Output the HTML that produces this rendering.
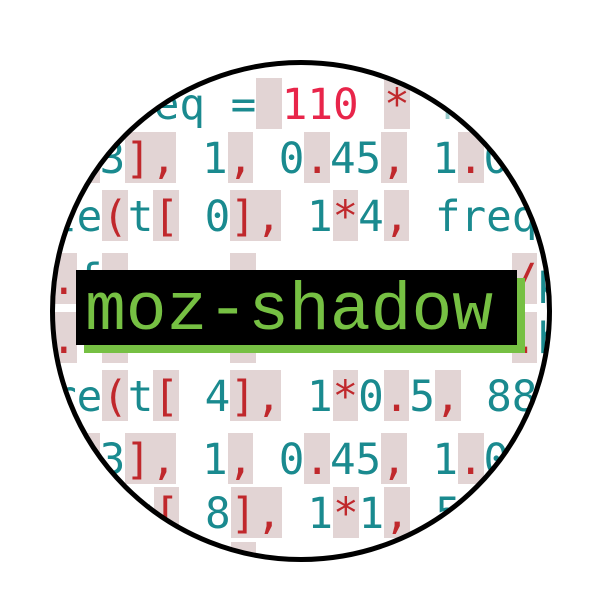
<!DOCTYPE html>
<html><head><meta charset="utf-8"><style>
html,body{margin:0;padding:0;background:#fff;width:600px;height:600px;overflow:hidden;position:relative}
#clip{position:absolute;left:0;top:0;width:600px;height:600px;clip-path:circle(248px at 301px 310px);}
.r{position:absolute;white-space:pre;font-family:"DejaVu Sans Mono",monospace;font-size:42.6px;line-height:54px;height:51px;color:#1a8a8f}
.r span{display:inline-block;width:25.6px;height:51px;text-align:center;vertical-align:top;overflow:visible}
.p{background:#e2d4d4;color:#c0282c}
.n{color:#e8254a}
#ring{position:absolute;left:50px;top:60px;width:492px;height:492px;border:5px solid #000;border-radius:50%}
#lab{position:absolute;left:76px;top:270px;width:441px;height:75px;background:#000;box-shadow:8px 8px 0 #76c043}
#lab div{position:absolute;left:9px;top:4px;font-family:"Liberation Mono","Courier New",monospace;font-size:68px;line-height:75px;color:#76c043;white-space:pre}
</style></head><body>
<div id="clip">
<div class="r" style="left:77px;top:78px"><span></span><span></span><span></span><span>e</span><span>q</span><span> </span><span>=</span><span class="p"> </span><span class="n">1</span><span class="n">1</span><span class="n">0</span><span> </span><span class="p">*</span><span> </span><span style="color:#9cc">f</span></div>
<div class="r" style="left:74px;top:132px"><span class="p">[</span><span>3</span><span class="p">]</span><span class="p">,</span><span> </span><span>1</span><span class="p">,</span><span> </span><span>0</span><span class="p">.</span><span>4</span><span>5</span><span class="p">,</span><span> </span><span>1</span><span class="p">.</span><span>0</span></div>
<div class="r" style="left:51px;top:190px"><span>l</span><span>e</span><span class="p">(</span><span>t</span><span class="p">[</span><span> </span><span>0</span><span class="p">]</span><span class="p">,</span><span> </span><span>1</span><span class="p">*</span><span>4</span><span class="p">,</span><span> </span><span>f</span><span>r</span><span>e</span><span>q</span></div>
<div class="r" style="left:51px;top:253px"><span class="p">.</span><span>f</span><span class="p"> </span><span></span><span></span><span></span><span></span><span class="p"> </span><span></span><span></span><span></span><span></span><span></span><span></span><span></span><span></span><span></span><span></span><span class="p">/</span><span>p</span></div>
<div class="r" style="left:51px;top:312px"><span class="p">.</span><span></span><span class="p"> </span><span></span><span></span><span></span><span></span><span class="p"> </span><span></span><span></span><span></span><span></span><span></span><span></span><span></span><span></span><span></span><span></span><span class="p">.</span><span>b</span></div>
<div class="r" style="left:51px;top:370px"><span>r</span><span>e</span><span class="p">(</span><span>t</span><span class="p">[</span><span> </span><span>4</span><span class="p">]</span><span class="p">,</span><span> </span><span>1</span><span class="p">*</span><span>0</span><span class="p">.</span><span>5</span><span class="p">,</span><span> </span><span>8</span><span>8</span></div>
<div class="r" style="left:74px;top:433px"><span class="p">[</span><span>3</span><span class="p">]</span><span class="p">,</span><span> </span><span>1</span><span class="p">,</span><span> </span><span>0</span><span class="p">.</span><span>4</span><span>5</span><span class="p">,</span><span> </span><span>1</span><span class="p">.</span><span>0</span></div>
<div class="r" style="left:77px;top:487px"><span></span><span></span><span>t</span><span class="p">[</span><span> </span><span>8</span><span class="p">]</span><span class="p">,</span><span> </span><span>1</span><span class="p">*</span><span>1</span><span class="p">,</span><span> </span><span>5</span></div>
<div class="r" style="left:77px;top:542px"><span></span><span></span><span></span><span></span><span></span><span></span><span class="p"> </span></div>
</div>
<div id="ring"></div>
<div id="lab"><div>moz-shadow</div></div>
</body></html>
